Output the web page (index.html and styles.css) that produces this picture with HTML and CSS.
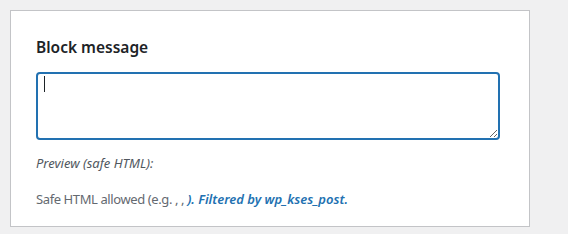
FILE: index.html
```html
<!DOCTYPE html>
<html>
<head>
    <link rel="stylesheet" href="styles.css">
</head>
<body>
    <div class="postbox">
        <h2 class="box-title">Block message</h2>

        <div class="field">
            <textarea class="block-msg" id="blockMessage"></textarea>
            <span class="caret"></span>
        </div>

        <p class="preview-label">Preview (safe HTML):</p>
        <div id="preview"></div>

        <p class="description">Safe HTML allowed (e.g. <code></code>, <code></code>, <em class="filter-note"><code></code>). Filtered by wp_kses_post.</em></p>
    </div>

    <script>
        // live preview of the message
        const box = document.getElementById('blockMessage');
        box.focus();
        box.addEventListener('input', function () {
            document.getElementById('preview').textContent = box.value;
            document.querySelector('.caret').style.display = 'none';
        });
    </script>
</body>
</html>
```

FILE: styles.css
```css
html, body {
    margin: 0;
    background-color: #f0f0f1;
}
body {
    padding: 10px;
    font-family: "Noto Sans", "Open Sans", sans-serif;
    font-size: 13px;
    color: #3c434a;
}
.postbox {
    box-sizing: border-box;
    width: 520px;
    height: 217px;
    padding: 0 25px;
    background-color: #fff;
    border: 1px solid #c3c4c7;
}
.box-title {
    margin: 25px 0 14px;
    font-size: 15.5px;
    font-weight: 600;
    line-height: 22px;
    color: #1d2327;
}
.field {
    position: relative;
    width: 464px;
}
.block-msg {
    display: block;
    box-sizing: border-box;
    width: 464px;
    height: 68px;
    padding: 4px 8px;
    border: 2px solid #2271b1;
    border-radius: 4px;
    outline: none;
    font-family: inherit;
    font-size: 14px;
    caret-color: transparent;
}
.caret {
    position: absolute;
    left: 8px;
    top: 4px;
    width: 1px;
    height: 16px;
    background-color: #1d2327;
}
.preview-label {
    margin: 14px 0 0;
    font-style: italic;
    color: #50575e;
    line-height: 18px;
}
#preview {
    min-height: 12px;
}
.description {
    margin: 6px 0 0;
    color: #646970;
    line-height: 18px;
    letter-spacing: -0.4px;
}
.description code {
    font-family: inherit;
}
.filter-note {
    font-weight: 600;
    color: #2271b1;
    letter-spacing: 0;
}
```
